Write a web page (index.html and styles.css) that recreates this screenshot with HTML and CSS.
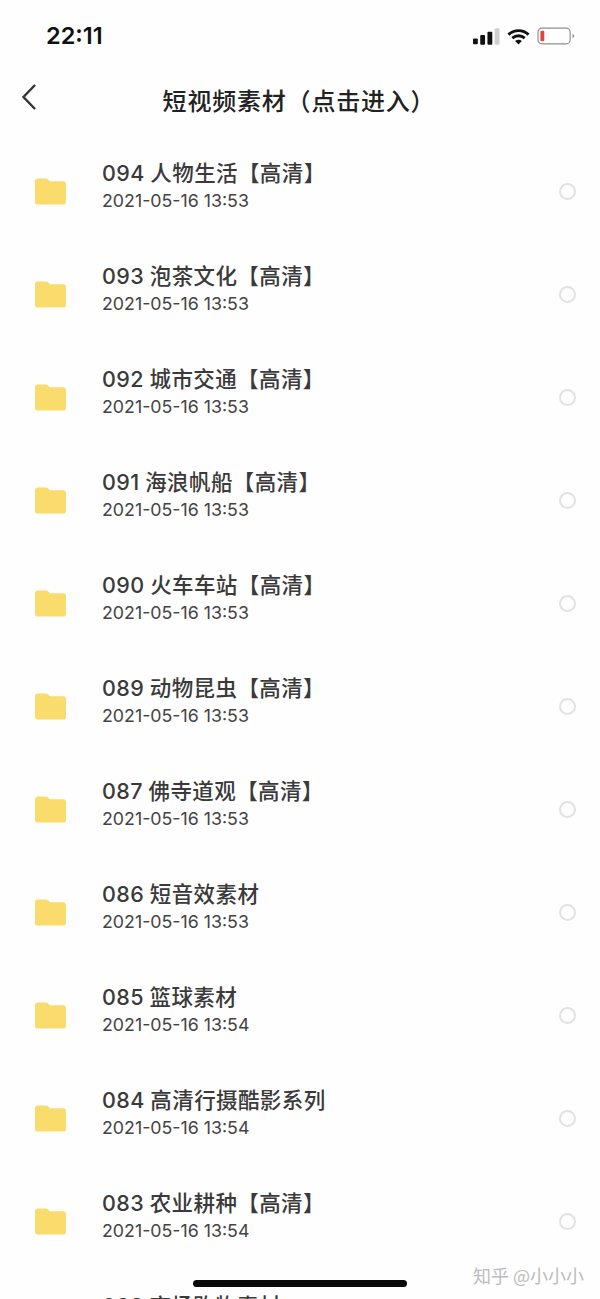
FILE: index.html
```html
<!DOCTYPE html>
<html lang="zh">
<head>
<meta charset="utf-8">
<title>短视频素材</title>
<link rel="stylesheet" href="styles.css">
</head>
<body>
<div class="screen">
  <div class="status">
    <span class="time">22:11</span>
    <div class="status-icons">
      <svg class="signal" viewBox="0 0 28 17"><rect x="0" y="10.500" width="5" height="6" rx="1" fill="#111"/><rect x="7.500" y="7" width="5" height="10" rx="1" fill="#111"/><rect x="15" y="3.500" width="5" height="13.500" rx="1" fill="#111"/><rect x="22.500" y="0" width="5" height="17" rx="1" fill="#cfcfcf"/></svg>
      <svg class="wifi" viewBox="0 0 24 17"><path d="M1.500 6.500C7.500 1 16.500 1 22.500 6.500" fill="none" stroke="#111" stroke-width="3"/><path d="M5.500 10.200C9.300 6.900 14.700 6.900 18.500 10.200" fill="none" stroke="#111" stroke-width="3"/><path d="M8.500 13.200L12 16.800L15.500 13.200C13.500 11.400 10.500 11.400 8.500 13.200Z" fill="#111"/></svg>
      <svg class="battery" viewBox="0 0 39 18"><rect x="1" y="1" width="33" height="16" rx="4" fill="none" stroke="#8f8f8f" stroke-width="1.200"/><rect x="3.500" y="3.500" width="4" height="11" rx="1.500" fill="#d9483b"/><path d="M36.500 6.500L38.500 9L36.500 11.500Z" fill="#8f8f8f"/></svg>
    </div>
  </div>
  <header class="nav">
    <svg class="back" viewBox="0 0 16 28"><path d="M14 2L2.500 14L14 26" fill="none" stroke="#333" stroke-width="2.400"/></svg>
    <h1 class="nav-title">短视频素材（点击进入）</h1>
  </header>
  <ul class="list">
    <li class="row"><svg class="folder" viewBox="0 0 32 27"><path d="M3 0H11C13 0 14 1 15.500 3H29C31 3 32 4 32 6V24C32 26 31 27 29 27H3C1 27 0 26 0 24V3C0 1 1 0 3 0Z" fill="#fadc6c"/></svg><div class="info"><div class="name">094 人物生活【高清】</div><div class="date">2021-05-16 13:53</div></div><span class="radio"></span></li>
    <li class="row"><svg class="folder" viewBox="0 0 32 27"><path d="M3 0H11C13 0 14 1 15.500 3H29C31 3 32 4 32 6V24C32 26 31 27 29 27H3C1 27 0 26 0 24V3C0 1 1 0 3 0Z" fill="#fadc6c"/></svg><div class="info"><div class="name">093 泡茶文化【高清】</div><div class="date">2021-05-16 13:53</div></div><span class="radio"></span></li>
    <li class="row"><svg class="folder" viewBox="0 0 32 27"><path d="M3 0H11C13 0 14 1 15.500 3H29C31 3 32 4 32 6V24C32 26 31 27 29 27H3C1 27 0 26 0 24V3C0 1 1 0 3 0Z" fill="#fadc6c"/></svg><div class="info"><div class="name">092 城市交通【高清】</div><div class="date">2021-05-16 13:53</div></div><span class="radio"></span></li>
    <li class="row"><svg class="folder" viewBox="0 0 32 27"><path d="M3 0H11C13 0 14 1 15.500 3H29C31 3 32 4 32 6V24C32 26 31 27 29 27H3C1 27 0 26 0 24V3C0 1 1 0 3 0Z" fill="#fadc6c"/></svg><div class="info"><div class="name">091 海浪帆船【高清】</div><div class="date">2021-05-16 13:53</div></div><span class="radio"></span></li>
    <li class="row"><svg class="folder" viewBox="0 0 32 27"><path d="M3 0H11C13 0 14 1 15.500 3H29C31 3 32 4 32 6V24C32 26 31 27 29 27H3C1 27 0 26 0 24V3C0 1 1 0 3 0Z" fill="#fadc6c"/></svg><div class="info"><div class="name">090 火车车站【高清】</div><div class="date">2021-05-16 13:53</div></div><span class="radio"></span></li>
    <li class="row"><svg class="folder" viewBox="0 0 32 27"><path d="M3 0H11C13 0 14 1 15.500 3H29C31 3 32 4 32 6V24C32 26 31 27 29 27H3C1 27 0 26 0 24V3C0 1 1 0 3 0Z" fill="#fadc6c"/></svg><div class="info"><div class="name">089 动物昆虫【高清】</div><div class="date">2021-05-16 13:53</div></div><span class="radio"></span></li>
    <li class="row"><svg class="folder" viewBox="0 0 32 27"><path d="M3 0H11C13 0 14 1 15.500 3H29C31 3 32 4 32 6V24C32 26 31 27 29 27H3C1 27 0 26 0 24V3C0 1 1 0 3 0Z" fill="#fadc6c"/></svg><div class="info"><div class="name">087 佛寺道观【高清】</div><div class="date">2021-05-16 13:53</div></div><span class="radio"></span></li>
    <li class="row"><svg class="folder" viewBox="0 0 32 27"><path d="M3 0H11C13 0 14 1 15.500 3H29C31 3 32 4 32 6V24C32 26 31 27 29 27H3C1 27 0 26 0 24V3C0 1 1 0 3 0Z" fill="#fadc6c"/></svg><div class="info"><div class="name">086 短音效素材</div><div class="date">2021-05-16 13:53</div></div><span class="radio"></span></li>
    <li class="row"><svg class="folder" viewBox="0 0 32 27"><path d="M3 0H11C13 0 14 1 15.500 3H29C31 3 32 4 32 6V24C32 26 31 27 29 27H3C1 27 0 26 0 24V3C0 1 1 0 3 0Z" fill="#fadc6c"/></svg><div class="info"><div class="name">085 篮球素材</div><div class="date">2021-05-16 13:54</div></div><span class="radio"></span></li>
    <li class="row"><svg class="folder" viewBox="0 0 32 27"><path d="M3 0H11C13 0 14 1 15.500 3H29C31 3 32 4 32 6V24C32 26 31 27 29 27H3C1 27 0 26 0 24V3C0 1 1 0 3 0Z" fill="#fadc6c"/></svg><div class="info"><div class="name">084 高清行摄酷影系列</div><div class="date">2021-05-16 13:54</div></div><span class="radio"></span></li>
    <li class="row"><svg class="folder" viewBox="0 0 32 27"><path d="M3 0H11C13 0 14 1 15.500 3H29C31 3 32 4 32 6V24C32 26 31 27 29 27H3C1 27 0 26 0 24V3C0 1 1 0 3 0Z" fill="#fadc6c"/></svg><div class="info"><div class="name">083 农业耕种【高清】</div><div class="date">2021-05-16 13:54</div></div><span class="radio"></span></li>
    <li class="row"><svg class="folder" viewBox="0 0 32 27"><path d="M3 0H11C13 0 14 1 15.500 3H29C31 3 32 4 32 6V24C32 26 31 27 29 27H3C1 27 0 26 0 24V3C0 1 1 0 3 0Z" fill="#fadc6c"/></svg><div class="info"><div class="name">082 商场购物素材</div><div class="date">2021-05-16 13:54</div></div><span class="radio"></span></li>
  </ul>
  <div class="home-bar"></div>
  <div class="watermark">知乎 @小小小</div>
</div>
</body>
</html>
```
FILE: styles.css
```css
* { box-sizing: border-box; }
html, body { margin: 0; padding: 0; }
body { background: #fff; font-family: Inter, "Noto Sans CJK SC", sans-serif; }
.screen { position: relative; width: 600px; height: 1299px; overflow: hidden; background: #fefefe; }
.status { height: 72px; display: flex; align-items: flex-start; justify-content: space-between; padding: 21px 25px 0 46px; }
.time { font-size: 23.500px; line-height: 30px; font-weight: 600; color: #111; }
.status-icons { display: flex; align-items: center; gap: 7px; padding-top: 6px; }
.signal { width: 27px; height: 17px; }
.wifi { width: 23px; height: 17px; }
.battery { width: 38px; height: 18px; }
.nav { position: relative; height: 61px; display: flex; align-items: flex-start; justify-content: center; }
.back { position: absolute; left: 21px; top: 11px; width: 16px; height: 28px; }
.nav-title { margin: 0 2px 0 0; padding: 10px 0 0 0; font-size: 24px; line-height: 36px; font-weight: 500; color: #222; font-family: "Noto Sans CJK SC", sans-serif; letter-spacing: 0.8px; }
.list { list-style: none; margin: 0; padding: 0; }
.row { height: 103px; display: flex; align-items: center; padding: 0 24px 0 35px; }
.folder { width: 31px; height: 27px; flex: none; margin-top: 14px; }
.info { flex: 1; margin-left: 36px; padding-top: 1px; }
.name { font-size: 21.500px; line-height: 30px; font-weight: 500; color: #3a3a3a; letter-spacing: 0.4px; word-spacing: -0.5px; white-space: nowrap; font-family: Inter, "Noto Sans CJK SC", sans-serif; }
.date { font-size: 17.800px; line-height: 22px; color: #444; margin-top: 2px; font-family: Inter, sans-serif; }
.radio { width: 17px; height: 17px; border: 2px solid #e2e2e2; border-radius: 50%; flex: none; margin-top: 14px; }
.home-bar { position: absolute; left: 193px; top: 1280px; width: 214px; height: 7px; border-radius: 4px; background: #0a0a0a; }
.watermark { position: absolute; left: 473px; top: 1263px; font-size: 18px; line-height: 24px; color: #bcbcbc; font-family: "Noto Sans CJK SC", sans-serif; white-space: nowrap; }
```
